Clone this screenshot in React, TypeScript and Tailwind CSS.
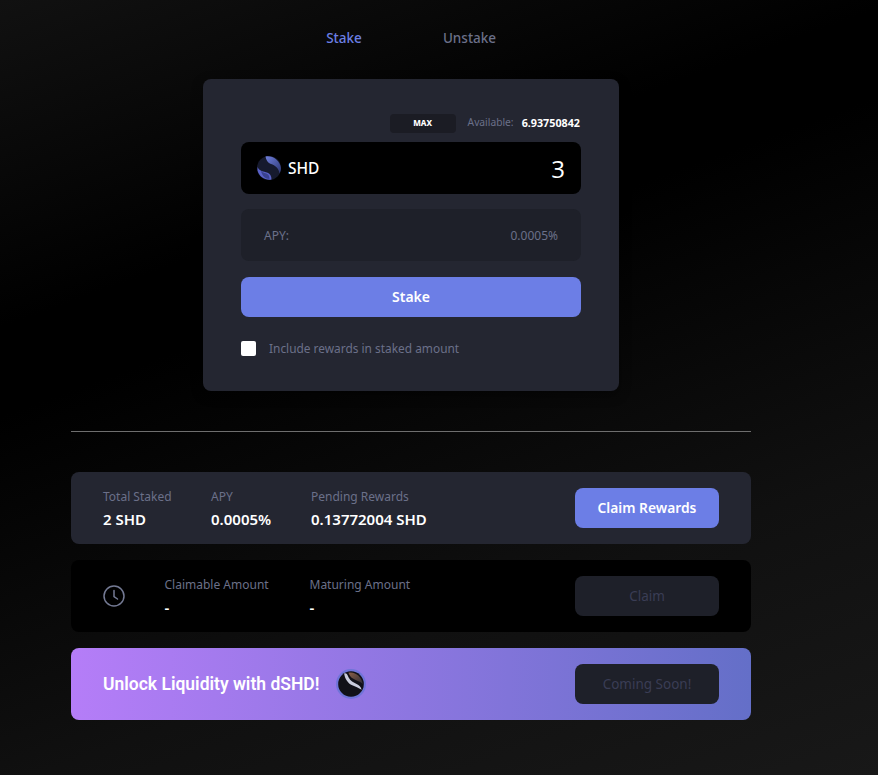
const font = "font-['Noto_Sans',sans-serif]";

function ShdLogo({ id }: { id: string }) {
  return (
    <svg width={24} height={24} viewBox="0 0 48 48" className="shrink-0">
      <defs>
        <linearGradient id={id} x1="0" y1="0" x2="1" y2="1">
          <stop offset="0" stopColor="#6f7fdc" />
          <stop offset="1" stopColor="#2c3672" />
        </linearGradient>
      </defs>
      <circle cx="24" cy="24" r="24" fill="#161a2e" />
      <path d="M17 1C30 -2 46 8 48 24 48 28 47 31 45 35 44 24 36 19 28 16 22 14 18 8 17 1Z" fill={`url(#${id})`} />
      <path d="M1 22C4 30 14 31 20 33 26 35 29 40 29 47 17 49 4 42 1 29Z" fill="#5a62c8" />
      <path d="M8 30C13 34 18 34 22 37 24 39 25 42 25 46 17 46 10 40 8 30Z" fill="#3a4290" />
    </svg>
  );
}

function DLogo() {
  return (
    <svg width={30} height={30} viewBox="0 0 48 48" className="shrink-0">
      <defs>
        <linearGradient id="dlb" x1="0" y1="0" x2="1" y2="1">
          <stop offset="0" stopColor="#8a6048" />
          <stop offset="1" stopColor="#2a2a34" />
        </linearGradient>
      </defs>
      <circle cx="24" cy="24" r="24" fill="#6f74d8" />
      <circle cx="24" cy="24" r="20.5" fill="#111118" />
      <path d="M20 6C30 3 41 12 43 24 38 19 30 18 25 14 23 12 21 9 20 6Z" fill="url(#dlb)" />
      <path d="M13 7C17 6 18 9 20 13 23 19 28 21 33 24 37 26 40 29 41 33 36 30 31 28 26 26 19 23 14 15 13 7Z" fill="#c9ccdd" />
    </svg>
  );
}

function Stat({ label, value, className }: { label: string; value: string; className?: string }) {
  return (
    <div className={className}>
      <div className="pt-px text-[12px] leading-[17px] text-[#6b7089]">{label}</div>
      <div className="mt-[3px] text-[15px] leading-[22px] font-semibold text-white">{value}</div>
    </div>
  );
}

export default function App() {
  return (
    <div className={`${font} h-[775px] w-[878px] overflow-hidden bg-[linear-gradient(160deg,#111111_0%,#000000_30%,#000000_38%,#101010_72%,#181818_100%)]`}>
      <div className="flex w-[822px] flex-col items-center">
        <div className="mt-[29px] flex h-[18px] items-center text-[13.5px] font-medium leading-[18px]">
          <span className="w-[37px] text-center whitespace-nowrap text-[#6b7fe3]">Stake</span>
          <span className="ml-[80px] w-[54px] text-center whitespace-nowrap text-[#6b7089]">Unstake</span>
        </div>

        <div className="mt-[32px] h-[312px] w-[416px] rounded-[8px] bg-[#242631] px-[38px] pt-[34px] shadow-[0_4px_12px_rgba(0,0,0,0.4)]">
          <div className="flex h-[20px] items-center justify-end pr-px">
            <div className="flex h-[19px] w-[66px] items-center justify-center rounded-[4px] bg-[#1b1c24] text-[8px] font-extrabold text-white">MAX</div>
            <span className="ml-[12px] text-[10.25px] text-[#6b7089]">Available:</span>
            <span className="ml-[8px] text-[10.75px] font-bold text-white">6.93750842</span>
          </div>
          <div className="mt-[9px] flex h-[52px] items-center rounded-[8px] bg-black pl-[16px] pr-[16px]">
            <ShdLogo id="s1" />
            <span className="ml-[7px] pt-px text-[15.5px] font-medium text-white">SHD</span>
            <span className="ml-auto pt-[2px] font-['Open_Sans',sans-serif] text-[24px] leading-none text-white">3</span>
          </div>
          <div className="mt-[15px] flex h-[52px] items-center justify-between rounded-[8px] bg-[#1e2029] px-[23px] pt-[1px] text-xs text-[#6b7089]">
            <span>APY:</span>
            <span>0.0005%</span>
          </div>
          <div className="mt-[16px] flex h-[40px] items-center justify-center rounded-[8px] bg-[#6c7ee6] pb-px text-[14px] font-semibold text-white">Stake</div>
          <div className="mt-[23px] flex h-[16px] items-center">
            <div className="size-[15px] rounded-[2px] bg-white" />
            <span className="ml-[13px] pt-[1px] text-[11.9px] text-[#6b7089]">Include rewards in staked amount</span>
          </div>
        </div>

        <div className="mt-[40px] h-px w-[680px] bg-[#6e6e6e]" />

        <div className="mt-[40px] flex h-[72px] w-[680px] items-center rounded-[8px] bg-[#242631] pl-[32px] pr-[32px]">
          <Stat label="Total Staked" value="2 SHD" className="w-[108px]" />
          <Stat label="APY" value="0.0005%" className="w-[100px]" />
          <Stat label="Pending Rewards" value="0.13772004 SHD" />
          <button className="ml-auto h-[40px] w-[144px] rounded-[8px] bg-[#6c7ee6] text-[13.8px] font-semibold text-white">Claim Rewards</button>
        </div>

        <div className="mt-[16px] flex h-[72px] w-[680px] items-center rounded-[8px] bg-black pl-[32px] pr-[32px]">
          <svg width="22" height="22" viewBox="0 0 22 22" fill="none" stroke="#747a94" strokeWidth="1.5" strokeLinecap="round" className="shrink-0">
            <circle cx="11" cy="11" r="10" />
            <path d="M11 5.5V11.5L14.5 14" />
          </svg>
          <Stat label="Claimable Amount" value="-" className="ml-[39.5px] w-[145px]" />
          <Stat label="Maturing Amount" value="-" />
          <button className="ml-auto h-[40px] w-[144px] rounded-[8px] bg-[#1e2029] text-[13.5px] text-[#3a3d55]">Claim</button>
        </div>

        <div className="mt-[16px] flex h-[72px] w-[680px] items-center rounded-[8px] bg-[linear-gradient(90deg,#b57df8_0%,#646fc8_100%)] pl-[32px] pr-[32px]">
          <span className="font-['Roboto',sans-serif] text-[17.5px] font-semibold text-white">Unlock Liquidity with dSHD!</span>
          <span className="ml-[17px]"><DLogo /></span>
          <button className="ml-auto h-[40px] w-[144px] rounded-[8px] bg-[#1e2029] text-[13.5px] text-[#3a3d55]">Coming Soon!</button>
        </div>
      </div>
    </div>
  );
}
